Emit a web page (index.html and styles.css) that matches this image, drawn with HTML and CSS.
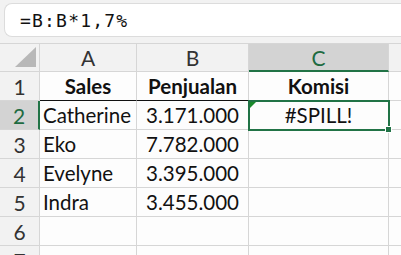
FILE: index.html
```html
<!DOCTYPE html>
<html>
<head>
<meta charset="utf-8">
<link rel="stylesheet" href="styles.css">
</head>
<body>
<div class="app">
  <div class="fbar"><span class="formula">=B:B*1,7%</span></div>
  <div class="sheet">
    <div class="corner"><span class="tri"></span></div>
    <div class="ch">A</div>
    <div class="ch">B</div>
    <div class="ch sel">C</div>
    <div class="ch last"></div>

    <div class="rh">1</div>
    <div class="c b ctr topline">Sales</div>
    <div class="c b ctr topline">Penjualan</div>
    <div class="c b ctr">Komisi</div>
    <div class="c last"></div>

    <div class="rh rsel">2</div>
    <div class="c">Catherine</div>
    <div class="c ctr">3.171.000</div>
    <div class="c ctr active"><span class="err"></span>#SPILL!<span class="handle"></span></div>
    <div class="c last"></div>

    <div class="rh">3</div>
    <div class="c">Eko</div>
    <div class="c ctr">7.782.000</div>
    <div class="c"></div>
    <div class="c last"></div>

    <div class="rh">4</div>
    <div class="c">Evelyne</div>
    <div class="c ctr">3.395.000</div>
    <div class="c"></div>
    <div class="c last"></div>

    <div class="rh">5</div>
    <div class="c">Indra</div>
    <div class="c ctr">3.455.000</div>
    <div class="c"></div>
    <div class="c last"></div>

    <div class="rh">6</div>
    <div class="c"></div>
    <div class="c"></div>
    <div class="c"></div>
    <div class="c last"></div>

    <div class="rh">7</div>
    <div class="c"></div>
    <div class="c"></div>
    <div class="c"></div>
    <div class="c last"></div>
  </div>
</div>
</body>
</html>
```

FILE: styles.css
```css
* { box-sizing: border-box; }
html, body { margin: 0; padding: 0; }
body {
  width: 401px;
  height: 255px;
  overflow: hidden;
  background: #f2f2f2;
  font-family: Lato, "Open Sans", sans-serif;
}
.app {
  display: flex;
  flex-direction: column;
  padding-top: 3px;
}
.fbar {
  margin-left: 4px;
  height: 34px;
  background: #fff;
  border: 1px solid #dcdcdc;
  border-right: none;
  border-radius: 8px 0 0 8px;
  display: flex;
  align-items: center;
  padding-left: 15px;
}
.formula {
  font-family: "DejaVu Sans Mono", monospace;
  font-size: 18px;
  letter-spacing: 1.2px;
  color: #111;
}
.sheet {
  margin-top: 6px;
  display: grid;
  grid-template-columns: 40px 97px 112px 140px 1fr;
  grid-template-rows: 28px repeat(7, 29px);
  border-top: 1px solid #d6d6d6;
}
.corner, .ch, .rh, .c {
  border-right: 1px solid #d6d6d6;
  border-bottom: 1px solid #d6d6d6;
  display: flex;
  align-items: center;
  font-size: 20px;
  color: #111;
  position: relative;
}
.corner { background: #f2f2f2; }
.tri {
  position: absolute;
  right: 3px;
  bottom: 4px;
  width: 0;
  height: 0;
  border-left: 21px solid transparent;
  border-bottom: 20px solid #b8b8b8;
}
.ch {
  background: #f2f2f2;
  justify-content: center;
  color: #333;
  font-size: 21px;
}
.ch.sel {
  background: #d3d3d3;
  color: #1e6b41;
  border-bottom: 2px solid #217346;
}
.ch.last, .c.last { border-right: none; }
.rh {
  background: #f2f2f2;
  justify-content: center;
  color: #333;
  font-size: 21px;
}
.rh.rsel {
  background: #d3d3d3;
  color: #1e6b41;
  border-right: 2px solid #217346;
}
.c {
  background: #fdfdfd;
  padding-left: 3px;
  font-size: 20.5px;
}
.c.ctr { justify-content: center; padding-left: 0; }
.c.b { font-weight: 700; }
.c.topline { border-bottom: 1px solid #111; }
.c.active {
  outline: 2px solid #217346;
  outline-offset: -1px;
  z-index: 2;
}
.err {
  position: absolute;
  left: 1px;
  top: 1px;
  width: 0;
  height: 0;
  border-top: 6px solid #1a8a2a;
  border-right: 6px solid transparent;
}
.handle {
  position: absolute;
  right: -4px;
  bottom: -4px;
  width: 7px;
  height: 7px;
  background: #217346;
  border: 1px solid #fff;
}
```
